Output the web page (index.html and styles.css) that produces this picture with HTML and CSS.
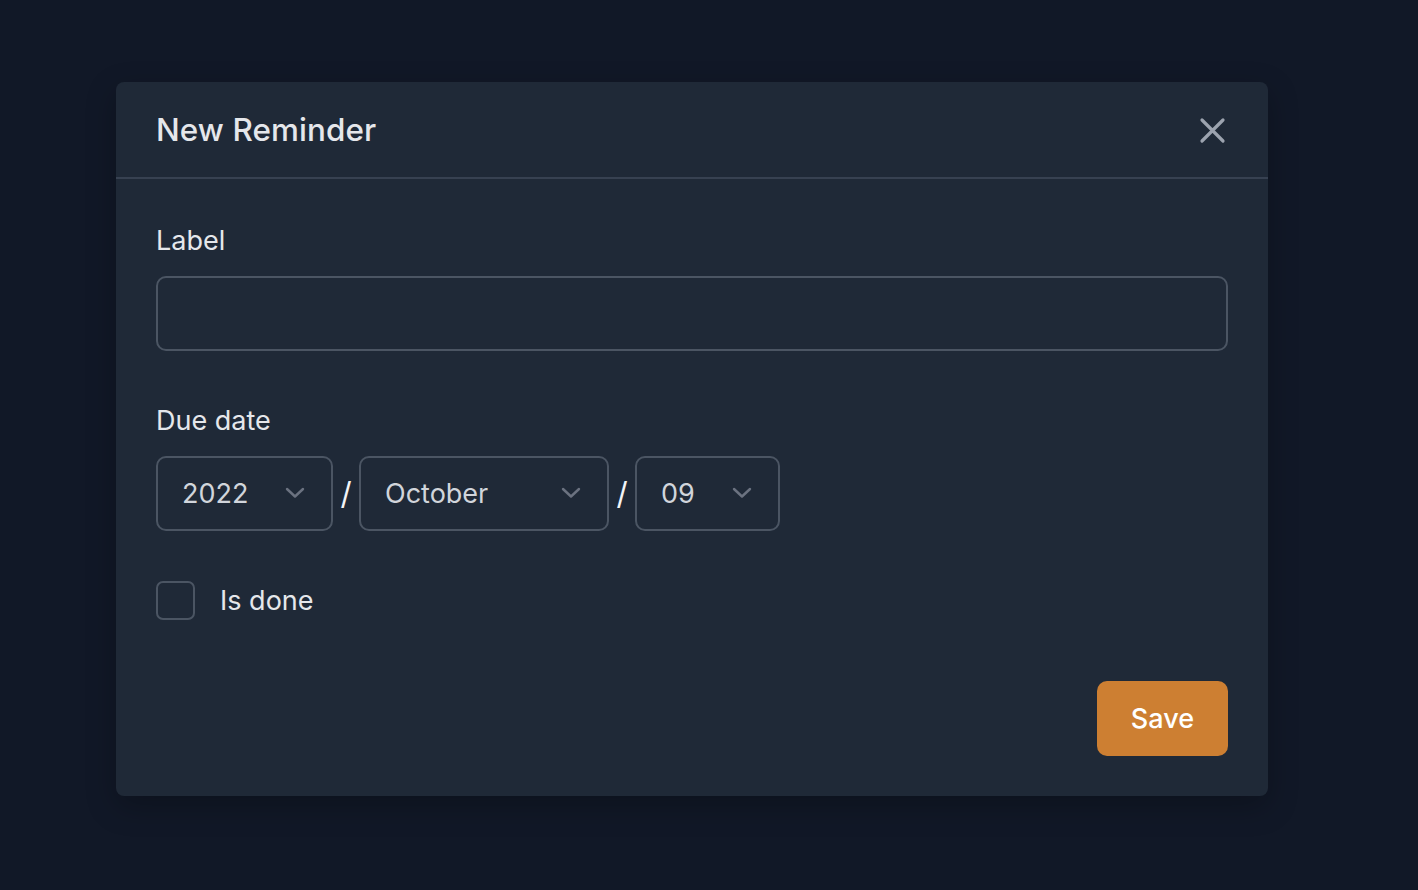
FILE: index.html
```html
<!DOCTYPE html>
<html lang="en">
<head>
<meta charset="utf-8">
<title>New Reminder</title>
<link rel="stylesheet" href="styles.css">
</head>
<body>
<div class="page">
  <div class="modal">
    <div class="modal-header">
      <h2 class="modal-title">New Reminder</h2>
      <button class="close-btn" aria-label="Close">
        <svg width="27" height="27" viewBox="0 0 27 27" fill="none" stroke="currentColor" stroke-width="3.2" stroke-linecap="round"><path d="M3 3L24 24M24 3L3 24"/></svg>
      </button>
    </div>
    <div class="modal-body">
      <div class="field field-label-input">
        <label class="field-label" for="label">Label</label>
        <input id="label" class="text-input" type="text">
      </div>
      <div class="field field-date">
        <label class="field-label">Due date</label>
        <div class="date-row">
          <div class="select-wrap">
            <select class="select">
              <option>2020</option><option>2021</option><option selected>2022</option><option>2023</option><option>2024</option>
            </select>
            <svg class="chevron" width="20" height="12" viewBox="0 0 20 12" fill="none" stroke="currentColor" stroke-width="2.4" stroke-linecap="round" stroke-linejoin="round"><path d="M2 2L10 9.5L18 2"/></svg>
          </div>
          <span class="slash">/</span>
          <div class="select-wrap">
            <select class="select">
              <option>January</option><option>February</option><option>March</option><option>April</option><option>May</option><option>June</option><option>July</option><option>August</option><option>September</option><option selected>October</option><option>November</option><option>December</option>
            </select>
            <svg class="chevron" width="20" height="12" viewBox="0 0 20 12" fill="none" stroke="currentColor" stroke-width="2.4" stroke-linecap="round" stroke-linejoin="round"><path d="M2 2L10 9.5L18 2"/></svg>
          </div>
          <span class="slash">/</span>
          <div class="select-wrap">
            <select class="select">
              <option>01</option><option>02</option><option>03</option><option>04</option><option>05</option><option>06</option><option>07</option><option>08</option><option selected>09</option><option>10</option><option>11</option><option>12</option>
            </select>
            <svg class="chevron" width="20" height="12" viewBox="0 0 20 12" fill="none" stroke="currentColor" stroke-width="2.4" stroke-linecap="round" stroke-linejoin="round"><path d="M2 2L10 9.5L18 2"/></svg>
          </div>
        </div>
      </div>
      <label class="check-row">
        <input type="checkbox" class="checkbox">
        <span class="check-label">Is done</span>
      </label>
      <div class="actions">
        <button class="save-btn">Save</button>
      </div>
    </div>
  </div>
</div>
</body>
</html>
```

FILE: styles.css
```css
* { box-sizing: border-box; }
html, body {
  margin: 0;
  padding: 0;
  background: #111827;
  font-family: Inter, "Noto Sans", sans-serif;
}
.page {
  padding: 82px 150px 0 116px;
  min-height: 890px;
}
.modal {
  width: 1152px;
  background: #1f2937;
  border-radius: 8px;
  box-shadow: 0 10px 30px rgba(0,0,0,0.25);
}
.modal-header {
  height: 97px;
  display: flex;
  align-items: center;
  justify-content: space-between;
  padding: 0 42px 0 40px;
  border-bottom: 2px solid #374151;
}
.modal-title {
  margin: 0;
  font-size: 31.4px;
  font-weight: 500;
  color: #e5e7eb;
  letter-spacing: 0.1px;
}
.close-btn {
  background: none;
  border: 0;
  padding: 0;
  color: #9ca3af;
  width: 27px;
  height: 27px;
  margin-top: 2px;
  display: flex;
  cursor: pointer;
}
.modal-body {
  padding: 44px 40px 40px 40px;
}
.field {
  display: flex;
  flex-direction: column;
  gap: 17px;
}
.field-label-input {
  margin-bottom: 52px;
}
.field-date {
  margin-bottom: 50px;
}
.field-label {
  font-size: 27px;
  line-height: 36px;
  color: #e5e7eb;
  font-weight: 400;
}
.text-input {
  height: 75px;
  width: 100%;
  background: #1f2937;
  border: 2px solid #4b5563;
  border-radius: 10px;
  color: #e5e7eb;
  font-family: inherit;
  font-size: 27px;
  padding: 0 24px;
  outline: none;
}
.date-row {
  display: flex;
  align-items: center;
}
.select-wrap {
  position: relative;
  display: flex;
}
.select {
  appearance: none;
  -webkit-appearance: none;
  height: 75px;
  background: #1f2937;
  border: 2px solid #4b5563;
  border-radius: 10px;
  color: #d1d5db;
  font-family: inherit;
  font-size: 27px;
  padding: 0 82px 0 24px;
  outline: none;
}
.chevron {
  position: absolute;
  right: 28px;
  top: 31px;
  color: #6b7280;
  pointer-events: none;
}
.slash {
  color: #f3f4f6;
  font-size: 31px;
  width: 26px;
  text-align: center;
  line-height: 1;
}
.check-row {
  display: flex;
  align-items: center;
  gap: 25px;
  height: 39px;
}
.checkbox {
  appearance: none;
  -webkit-appearance: none;
  flex-shrink: 0;
  margin: 0;
  width: 39px;
  height: 39px;
  border: 2px solid #4b5563;
  border-radius: 7px;
  background: #1f2937;
}
.check-label {
  font-size: 27px;
  color: #e5e7eb;
}
.actions {
  display: flex;
  justify-content: flex-end;
  margin-top: 61px;
}
.save-btn {
  height: 75px;
  padding: 0 34px;
  background: #cd7f32;
  color: #ffffff;
  border: 0;
  border-radius: 10px;
  font-family: inherit;
  font-size: 27px;
  font-weight: 500;
  cursor: pointer;
}
```
